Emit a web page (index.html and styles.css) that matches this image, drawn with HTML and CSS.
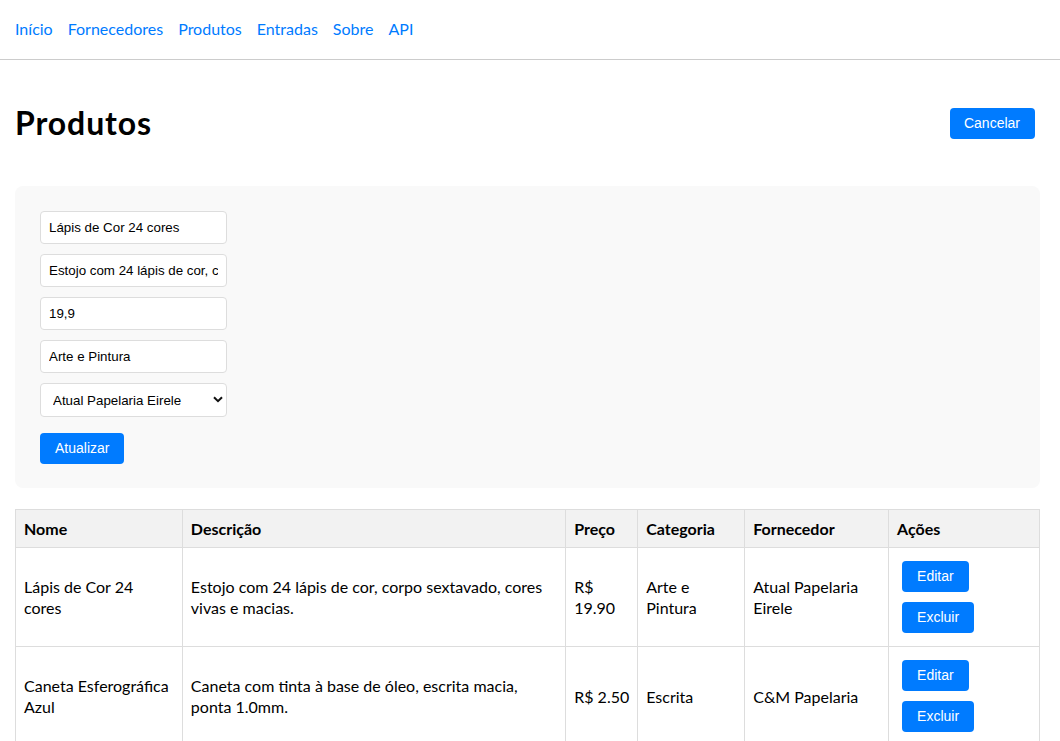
FILE: index.html
```html
<!DOCTYPE html>
<html lang="pt-BR">
<head>
<meta charset="utf-8">
<title>Produtos</title>
<link rel="stylesheet" href="styles.css">
</head>
<body>
<nav class="nav">
  <a href="#">Início</a>
  <a href="#">Fornecedores</a>
  <a href="#">Produtos</a>
  <a href="#">Entradas</a>
  <a href="#">Sobre</a>
  <a href="#">API</a>
</nav>
<main class="main">
  <div class="page-header">
    <h1 class="title">Produtos</h1>
    <button class="btn btn-cancel">Cancelar</button>
  </div>
  <form class="form-box">
    <input class="field" type="text" value="Lápis de Cor 24 cores">
    <input class="field" type="text" value="Estojo com 24 lápis de cor, corpo sextavado, cores vivas e macias.">
    <input class="field" type="text" value="19,9">
    <input class="field" type="text" value="Arte e Pintura">
    <div class="select-wrap">
      <select class="field select">
        <option>Atual Papelaria Eirele</option>
        <option>C&amp;M Papelaria</option>
      </select>
      <svg class="chevron" width="10" height="7" viewBox="0 0 10 7"><path d="M1 1.2 L5 5.2 L9 1.2" fill="none" stroke="#111" stroke-width="2"/></svg>
    </div>
    <div class="form-actions"><button type="button" class="btn">Atualizar</button></div>
  </form>
  <table class="table">
    <colgroup>
      <col class="c-nome"><col class="c-desc"><col class="c-preco"><col class="c-cat"><col class="c-forn"><col class="c-acoes">
    </colgroup>
    <thead>
      <tr><th>Nome</th><th>Descrição</th><th>Preço</th><th>Categoria</th><th>Fornecedor</th><th>Ações</th></tr>
    </thead>
    <tbody>
      <tr>
        <td>Lápis de Cor 24 cores</td>
        <td>Estojo com 24 lápis de cor, corpo sextavado, cores vivas e macias.</td>
        <td>R$ 19.90</td>
        <td>Arte e Pintura</td>
        <td>Atual Papelaria Eirele</td>
        <td class="actions"><button class="btn btn-sm">Editar</button><button class="btn btn-sm">Excluir</button></td>
      </tr>
      <tr>
        <td>Caneta Esferográfica Azul</td>
        <td>Caneta com tinta à base de óleo, escrita macia, ponta 1.0mm.</td>
        <td class="nowrap">R$ 2.50</td>
        <td>Escrita</td>
        <td>C&amp;M Papelaria</td>
        <td class="actions"><button class="btn btn-sm">Editar</button><button class="btn btn-sm">Excluir</button></td>
      </tr>
    </tbody>
  </table>
</main>
</body>
</html>
```
FILE: styles.css
```css
html, body {
  margin: 0;
  padding: 0;
  background: #fff;
}
body {
  font-family: Lato, "Noto Sans", sans-serif;
  font-size: 16px;
  color: #000;
}
body::-webkit-scrollbar { display: none; }

.nav {
  display: flex;
  gap: 15px;
  padding: 18px 15px 20px;
  line-height: 21px;
  border-bottom: 1px solid #ccc;
}
.nav a {
  color: #007bff;
  text-decoration: none;
}

.main {
  padding: 20px 20px 0 15px;
}

.page-header {
  display: flex;
  align-items: center;
  justify-content: space-between;
  padding-right: 5px;
  margin-bottom: 20px;
}
.title {
  margin: 22px 0;
  font-size: 32px;
  line-height: 42px;
  font-weight: 700;
  letter-spacing: 0.9px;
}

.btn {
  font-family: "Liberation Sans", Arial, sans-serif;
  font-size: 14px;
  line-height: 17px;
  padding: 7px 15px;
  border: none;
  border-radius: 4px;
  background: #007bff;
  color: #fff;
  cursor: pointer;
}
.btn-cancel {
  padding: 7px 15px 7px 14px;
}

.form-box {
  background: #f9f9f9;
  border-radius: 8px;
  padding: 25px 25px 24px;
  margin-bottom: 21px;
}
.field {
  display: block;
  box-sizing: border-box;
  width: 187px;
  height: 33px;
  margin: 0 0 10px;
  padding: 8px;
  border: 1px solid #ddd;
  border-radius: 4px;
  background: #fff;
  font-family: "Liberation Sans", Arial, sans-serif;
  font-size: 13.333px;
  color: #000;
  outline: none;
}
.select-wrap {
  position: relative;
  width: 187px;
}
.select {
  height: 34px;
  padding-left: 12px;
  -webkit-appearance: none;
  appearance: none;
}
.chevron {
  position: absolute;
  right: 4px;
  top: 13px;
  pointer-events: none;
}
.form-actions {
  padding-top: 6px;
}

.table {
  width: 1025px;
  border-collapse: collapse;
  line-height: 21px;
}
.c-nome { width: 167px; }
.c-desc { width: 384px; }
.c-preco { width: 72px; }
.c-cat { width: 107px; }
.c-forn { width: 144px; }
.c-acoes { width: 151px; }
.table th, .table td {
  border: 1px solid #ddd;
  padding: 8px;
  text-align: left;
  vertical-align: middle;
}
.table th {
  background: #f2f2f2;
  font-weight: 700;
}
.table .nowrap {
  white-space: nowrap;
}
.actions .btn-sm {
  margin: 5px;
}
```
